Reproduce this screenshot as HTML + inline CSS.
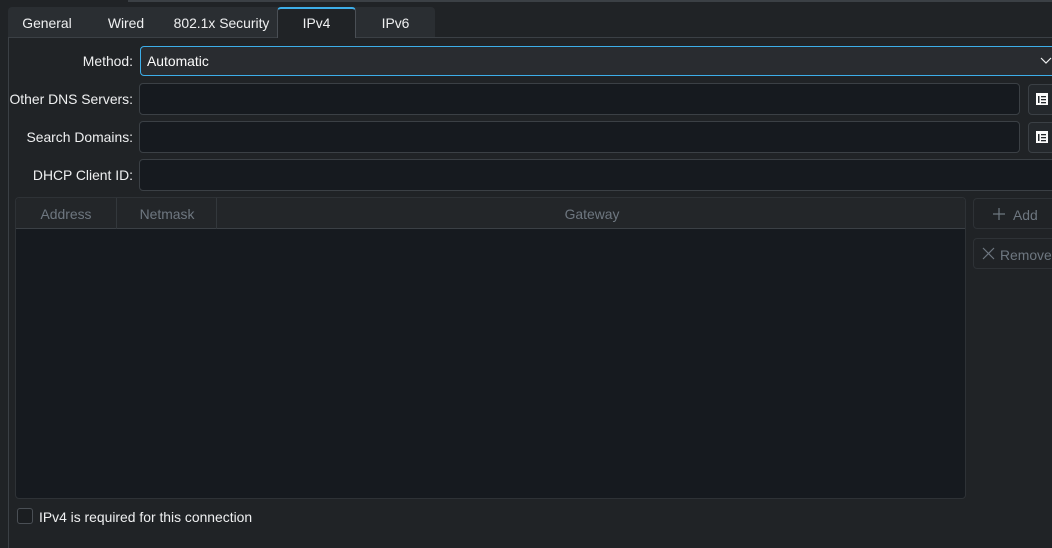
<!DOCTYPE html>
<html><head><meta charset="utf-8"><style>
*{box-sizing:border-box;margin:0;padding:0}
html,body{width:1052px;height:548px;overflow:hidden}
body{background:#202326;font-family:"Liberation Sans",sans-serif;font-size:13.9px;color:#fcfcfc;position:relative}
.abs{position:absolute}
.tabs{left:8px;top:7px;width:427px;height:31px;background:#2a2e32;border-radius:4px 4px 0 0}
.tab{position:absolute;top:8px;height:31px;line-height:30px;text-align:center;color:#eff0f1}
.sel{left:277px;top:7px;width:79px;height:31px;background:#202326;border:1px solid #4a4f55;border-bottom:none;border-top:2px solid #3daee9;border-radius:4px 4px 0 0}
.panel{left:8px;top:37px;width:1100px;height:520px;border:1px solid #3b4045}
.lbl{position:absolute;right:919px;text-align:right;color:#eff0f1}
.inp{position:absolute;left:139px;height:32px;background:#161a1f;border:1px solid #3b4045;border-radius:4px}
.btn{position:absolute;background:#24282c;border:1px solid #3b4045;border-radius:4px}
</style></head><body>
<div class="abs" style="left:128px;top:0;width:924px;height:2px;background:#3b4045"></div>
<div class="abs tabs"></div>
<div class="abs panel"></div>
<div class="abs sel"></div>
<div class="tab" style="left:8px;width:78px">General</div>
<div class="tab" style="left:86px;width:80px">Wired</div>
<div class="tab" style="left:166px;width:111px">802.1x Security</div>
<div class="tab" style="left:277px;width:79px">IPv4</div>
<div class="tab" style="left:356px;width:79px">IPv6</div>

<div class="lbl" style="top:53px">Method:</div>
<div class="abs" style="left:140px;top:46px;width:930px;height:30px;background:#292c30;border:1px solid #3daee9;border-radius:4px;padding:6px 0 0 6px">Automatic</div>
<svg class="abs" style="left:1040px;top:57px" width="12" height="8"><path d="M1 1 L6 6 L11 1" stroke="#eff0f1" fill="none" stroke-width="1.2"/></svg>

<div class="lbl" style="top:91px">Other DNS Servers:</div>
<div class="inp" style="top:83px;width:881px"></div>
<div class="btn" style="left:1028px;top:84px;width:40px;height:31px"></div>
<svg class="abs" style="left:1036px;top:93px" width="12" height="12"><rect width="12" height="12" fill="#fcfcfc"/><rect x="2" y="3" width="1.5" height="7" fill="#24282c"/><rect x="5" y="3" width="5" height="1.3" fill="#24282c"/><rect x="5" y="6" width="5" height="1.3" fill="#24282c"/><rect x="5" y="9" width="5" height="1.3" fill="#24282c"/></svg>

<div class="lbl" style="top:129px">Search Domains:</div>
<div class="inp" style="top:121px;width:881px"></div>
<div class="btn" style="left:1028px;top:122px;width:40px;height:31px"></div>
<svg class="abs" style="left:1036px;top:131px" width="12" height="12"><rect width="12" height="12" fill="#fcfcfc"/><rect x="2" y="3" width="1.5" height="7" fill="#24282c"/><rect x="5" y="3" width="5" height="1.3" fill="#24282c"/><rect x="5" y="6" width="5" height="1.3" fill="#24282c"/><rect x="5" y="9" width="5" height="1.3" fill="#24282c"/></svg>

<div class="lbl" style="top:167px">DHCP Client ID:</div>
<div class="inp" style="top:159px;width:930px"></div>

<div class="abs" style="left:15px;top:197px;width:951px;height:302px;background:#161a1f;border:1px solid #2e3236;border-radius:4px;overflow:hidden">
 <div style="height:31px;background:#232629;border-bottom:1px solid #3b4045;position:relative;color:#6e7780">
  <div style="position:absolute;left:0;width:100px;top:8px;text-align:center">Address</div>
  <div style="position:absolute;left:100px;top:0;width:1px;height:31px;background:#33383c"></div>
  <div style="position:absolute;left:101px;width:100px;top:8px;text-align:center">Netmask</div>
  <div style="position:absolute;left:200px;top:0;width:1px;height:31px;background:#33383c"></div>
  <div style="position:absolute;left:201px;width:750px;top:8px;text-align:center">Gateway</div>
 </div>
</div>

<div class="btn" style="left:973px;top:198px;width:100px;height:31px;background:#202326;border-color:#2e3236"></div>
<svg class="abs" style="left:993px;top:208px" width="12" height="12"><path d="M6 0V12M0 6H12" stroke="#6e7780" stroke-width="1.2"/></svg>
<div class="abs" style="left:1013px;top:207px;color:#6e7780">Add</div>
<div class="btn" style="left:973px;top:238px;width:100px;height:31px;background:#202326;border-color:#2e3236"></div>
<svg class="abs" style="left:982px;top:247px" width="13" height="13"><path d="M1 1L12 12M12 1L1 12" stroke="#6e7780" stroke-width="1.2"/></svg>
<div class="abs" style="left:1000px;top:247px;color:#6e7780">Remove</div>

<div class="abs" style="left:17px;top:508px;width:16px;height:16px;border:1px solid #4a4f55;border-radius:3px;background:#1b1e21"></div>
<div class="abs" style="left:39px;top:509px;color:#eff0f1">IPv4 is required for this connection</div>
</body></html>
